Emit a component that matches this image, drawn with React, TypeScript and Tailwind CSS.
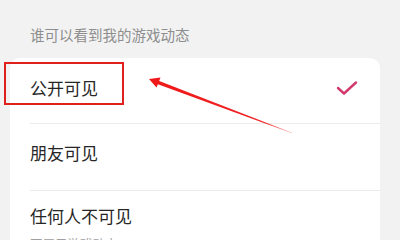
import React from 'react';

const FONT = { fontFamily: '"Noto Sans CJK SC", "Noto Sans", sans-serif' };

function Check() {
  return (
    <svg width="22" height="16" viewBox="0 0 22 16" fill="none">
      <polyline
        points="2,8 8,13.5 20,2.5"
        stroke="#d23a6c"
        strokeWidth="2.4"
        strokeLinecap="round"
        strokeLinejoin="round"
      />
    </svg>
  );
}

function Arrow() {
  return (
    <svg className="absolute left-0 top-0 pointer-events-none" width="400" height="240" viewBox="0 0 400 240">
      <defs>
        <linearGradient id="fade" x1="149" y1="79" x2="292" y2="133" gradientUnits="userSpaceOnUse">
          <stop offset="0" stopColor="#f01818" stopOpacity="1" />
          <stop offset="0.8" stopColor="#f01818" stopOpacity="0.95" />
          <stop offset="1" stopColor="#f01818" stopOpacity="0.3" />
        </linearGradient>
      </defs>
      <polygon
        fill="url(#fade)"
        points="149,79 160.5,77.5 159.2,80.9 292.1,132.7 291.9,133.3 157.9,84.2 156.5,87.5"
      />
    </svg>
  );
}

export default function App() {
  return (
    <div className="relative w-[400px] h-[240px] overflow-hidden bg-[#f2f2f2]" style={FONT}>
      <div className="h-[58px] pl-[30px] pt-[25px] text-[14.5px] leading-[20px] text-[#8e8e8e]">
        谁可以看到我的游戏动态
      </div>

      <div className="ml-[10px] w-[370px] bg-white rounded-t-[10px]">
        <div className="h-[65px] pb-[5px] pl-[20px] pr-[22px] flex items-center justify-between">
          <span className="text-[17px] leading-[24px] text-[#262626]">公开可见</span>
          <Check />
        </div>
        <div className="ml-[20px] h-px bg-[#ebebeb]" />

        <div className="h-[66px] pb-[8px] pl-[20px] flex items-center">
          <span className="text-[17px] leading-[24px] text-[#262626]">朋友可见</span>
        </div>
        <div className="ml-[20px] h-px bg-[#ebebeb]" />

        <div className="pl-[20px] pt-[13px] flex flex-col">
          <span className="text-[17px] leading-[24px] text-[#262626]">任何人不可见</span>
          <span className="mt-[7px] text-[12.5px] leading-[18px] text-[#a0a0a0]">不展示游戏动态</span>
        </div>
      </div>

      <div className="absolute left-[4px] top-[62px] w-[120px] h-[43px] border-2 border-[#e0201c]" />
      <Arrow />
    </div>
  );
}
